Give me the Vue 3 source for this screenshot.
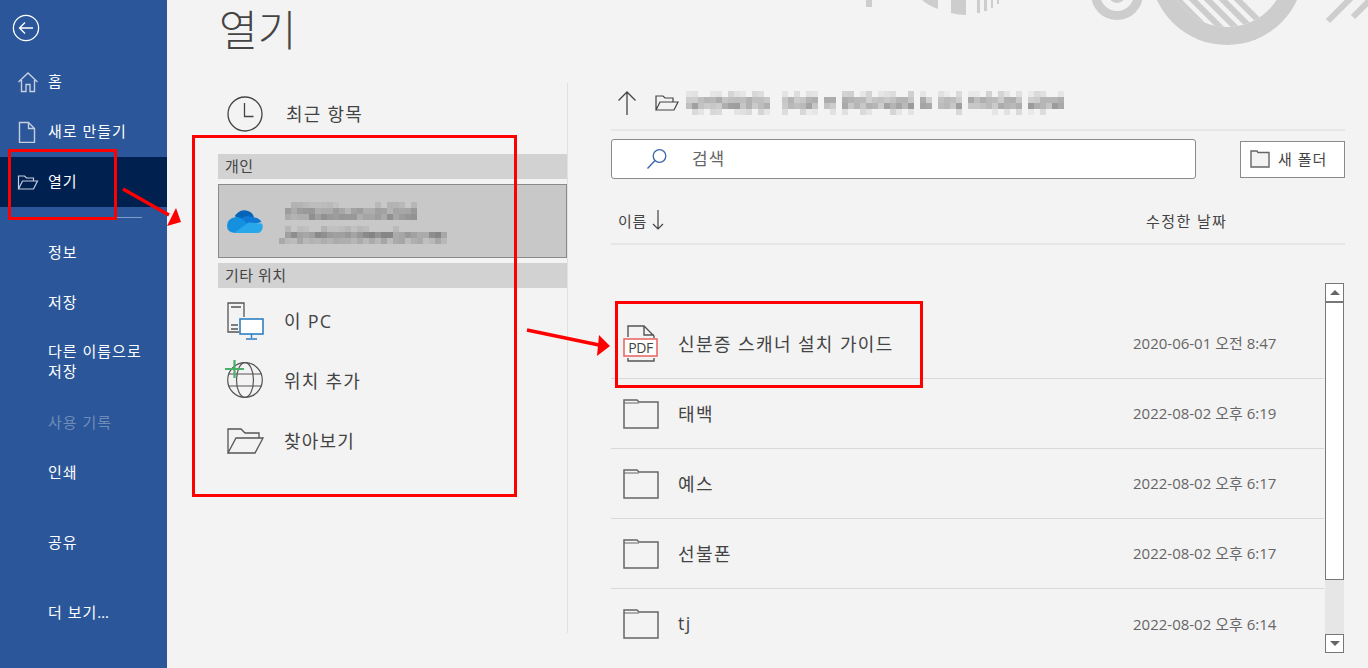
<template>
  <div class="app">
    <aside class="side">
      <div class="back">
        <svg width="28" height="28" viewBox="0 0 28 28" fill="none" stroke="#fff" stroke-width="1.3">
          <circle cx="14" cy="14" r="12.6" />
          <path d="M21 14H7.5M13 8.500 7.500 14l5.500 5.500" />
        </svg>
      </div>
      <a class="nav">
        <svg class="nav-icon" width="22" height="22" viewBox="0 0 22 22" fill="none" stroke="#c5cfdf" stroke-width="1.4">
          <path d="M1.500 11 11 2l9.500 9M4.500 9v11.500h4.500v-7h4v7h4.500V9" />
        </svg>
        <span>홈</span>
      </a>
      <a class="nav">
        <svg class="nav-icon" width="22" height="22" viewBox="0 0 22 22" fill="none" stroke="#c5cfdf" stroke-width="1.4">
          <path d="M2.500 1.500h9l6 6v14h-15zM11.500 1.500v6h6" />
        </svg>
        <span>새로 만들기</span>
      </a>
      <a class="nav active">
        <svg class="nav-icon" width="22" height="22" viewBox="0 0 22 22" fill="none" stroke="#c5cfdf" stroke-width="1.2">
          <path d="M1.500 18V5h6l2 2h7v3M1.500 18l4-8h15l-4 8z" />
        </svg>
        <span>열기</span>
      </a>
      <div class="nav-rule"></div>
      <a class="nav">정보</a>
      <a class="nav">저장</a>
      <a class="nav tall">다른 이름으로<br />저장</a>
      <a class="nav disabled">사용 기록</a>
      <a class="nav">인쇄</a>
      <a class="nav gap">공유</a>
      <a class="nav gap">더 보기…</a>
    </aside>

    <main class="main">
      <svg class="art" width="540" height="50" viewBox="840 0 540 50">
        <defs>
          <clipPath id="inner"><circle cx="1227" cy="-32" r="59" /></clipPath>
        </defs>
        <g fill="#cdcdcd">
          <rect x="866" y="0" width="6" height="7" />
          <path d="M922 0h16v9q-9-3-16-9z" />
          <path d="M951 0h15v15q-8 0-15-2z" />
          <rect x="977" y="0" width="3" height="13" />
          <rect x="984" y="0" width="3" height="11" />
          <rect x="991" y="0" width="2" height="8" />
          <rect x="997" y="0" width="2" height="4" />
          <circle cx="1117" cy="-6" r="26" />
          <circle cx="1227" cy="-32" r="77" />
        </g>
        <circle cx="1117" cy="-6" r="17" fill="#f3f3f3" />
        <circle cx="1117" cy="-6" r="9" fill="#cdcdcd" />
        <circle cx="1227" cy="-32" r="59" fill="#f3f3f3" />
        <g clip-path="url(#inner)" stroke="#cdcdcd" stroke-width="6">
          <path d="M1169-9l45 45M1187-6l36 36M1202-6l36 36M1217-6l36 36M1232-6l36 36" />
        </g>
        <path d="M1328 21 1354-5M1353 17 1376-6" stroke="#cdcdcd" stroke-width="6" fill="none" />
      </svg>

      <h1 class="title">열기</h1>

      <div class="columns">
        <section class="places">
          <div class="place recent">
            <svg class="place-icon" width="36" height="36" viewBox="0 0 36 36" fill="none" stroke="#444" stroke-width="1.300">
              <circle cx="18" cy="18" r="17" />
              <path d="M17.500 7v13.500h9" />
            </svg>
            <span>최근 항목</span>
          </div>
          <div class="group">개인</div>
          <div class="account">
            <svg class="cloud" width="36" height="25" viewBox="0 0 36 24">
              <path d="M14 20 8 6Q14-1 21 1.500 26 3 27 8L14 20z" fill="#0364b8" />
              <path d="M27 8q5 0 7.500 4.500L22 16 14 9q3-3 7-2.500z" fill="#0f78d4" />
              <path d="M9 7.500q4-.5 7 2.500l6 6-14 7.500Q0 23 0 16q0-7 9-8.500z" fill="#1490df" />
              <path d="M7 23.500 21.500 13 35 14q2 4-1 8-1 1.500-4 1.500z" fill="#28a8ea" />
            </svg>
            <svg class="mosaic account-mosaic" width="168" height="42" viewBox="0 0 168 42" shape-rendering="crispEdges">
              <rect v-for="(c, i) in accountCells" :key="i" :x="c.x" :y="c.y" width="6" height="6" :fill-opacity="c.o" />
            </svg>
          </div>
          <div class="group">기타 위치</div>
          <div class="place first">
            <svg class="place-icon" width="38" height="38" viewBox="0 0 38 38" fill="none" stroke="#555" stroke-width="1.300">
              <path d="M12 30H1V1h16v14M4 5h10M4 23h7M4 27h7" />
              <rect x="13" y="17" width="23" height="15" fill="#fff" stroke="#2f7fc4" stroke-width="1.600" />
              <path d="M24.500 32v4M19 37h11" stroke="#2f7fc4" stroke-width="1.400" />
            </svg>
            <span>이 PC</span>
          </div>
          <div class="place">
            <svg class="place-icon globe" width="38" height="38" viewBox="0 0 38 38" fill="none" stroke="#555" stroke-width="1.200">
              <circle cx="18" cy="19" r="17.300" />
              <ellipse cx="18" cy="19" rx="8.500" ry="17.300" />
              <path d="M1 13h34M1 25h34" />
              <path d="M-2 8h19M7.500-1v18" stroke="#4caf6a" stroke-width="2.200" />
            </svg>
            <span>위치 추가</span>
          </div>
          <div class="place">
            <svg class="place-icon" width="38" height="28" viewBox="0 0 38 28" fill="none" stroke="#555" stroke-width="1.300">
              <path d="M1 26V2h13l4 4h14v5M1 26l8-15h27l-8 15z" />
            </svg>
            <span>찾아보기</span>
          </div>
        </section>

        <section class="files">
          <div class="path">
            <svg width="20" height="26" viewBox="0 0 20 26" fill="none" stroke="#444" stroke-width="1.300">
              <path d="M10 25V2M1.500 10.500 10 2l8.500 8.500" />
            </svg>
            <svg class="path-folder" width="24" height="18" viewBox="0 0 24 18" fill="none" stroke="#444" stroke-width="1.200">
              <path d="M1 16V2h7l2 2h8v4M1 16 5 8h18l-4 8z" />
            </svg>
            <svg class="mosaic" width="378" height="24" viewBox="0 0 378 24" shape-rendering="crispEdges">
              <rect v-for="(c, i) in pathCells" :key="i" :x="c.x" :y="c.y" width="6" height="6" :fill-opacity="c.o" />
            </svg>
          </div>
          <div class="search-row">
            <div class="search">
              <svg width="22" height="22" viewBox="0 0 22 22" fill="none" stroke="#3a66a8" stroke-width="1.300">
                <circle cx="13.500" cy="8" r="6.300" />
                <path d="M9 12.500 1.500 20.500" />
              </svg>
              <span>검색</span>
            </div>
            <button class="new-folder">
              <svg width="20" height="18" viewBox="0 0 20 18" fill="#f3f3f3" stroke="#666" stroke-width="1.400">
                <path d="M1 17V1h6l1 1.500h11V17z" />
              </svg>
              <span>새 폴더</span>
            </button>
          </div>
          <div class="head">
            <span class="head-name">이름
              <svg width="12" height="22" viewBox="0 0 12 22" fill="none" stroke="#444" stroke-width="1.200">
                <path d="M6 1v19M1 15l5 5 5-5" />
              </svg>
            </span>
            <span class="head-date">수정한 날짜</span>
          </div>
          <div class="list-wrap">
            <ul class="list">
              <li v-for="f in files" :key="f.name" class="row">
                <svg v-if="f.pdf" width="36" height="38" viewBox="0 0 36 38" fill="none">
                  <path d="M5 12V1h16l10 10v2M21 1v9h10M5 33v3h26v-3" stroke="#555" stroke-width="1.400" />
                  <rect x="1" y="14" width="33" height="17" fill="#fff" stroke="#e8625f" stroke-width="1.500" />
                  <text x="17.500" y="27.500" text-anchor="middle" class="pdf-label">PDF</text>
                </svg>
                <svg v-else width="36" height="30" viewBox="0 0 36 30" fill="#f3f3f3" stroke="#666" stroke-width="1.500">
                  <path d="M1 29V1h13l2 2h19v26z" />
                  <path d="M1 4h15" stroke-width="1" />
                </svg>
                <span class="file-name">{{ f.name }}</span>
                <span class="file-date">{{ f.date }}</span>
              </li>
            </ul>
            <div class="scrollbar">
              <div class="sb-btn"><i class="tri up"></i></div>
              <div class="sb-thumb"></div>
              <div class="sb-track"></div>
              <div class="sb-btn"><i class="tri down"></i></div>
            </div>
          </div>
        </section>
      </div>
    </main>

    <div class="mark mark-open"></div>
    <div class="mark mark-places"></div>
    <div class="mark mark-file"></div>
    <svg class="arrows" width="1368" height="668" viewBox="0 0 1368 668">
      <path d="M123 189 169 215M527 330 599 345" stroke="#f00" stroke-width="3.500" fill="none" />
      <path d="M181 222 167 226 176 208zM610 346 597 356 599 335z" fill="#f00" />
    </svg>
  </div>
</template>

<script setup>
const files = [
  { name: "신분증 스캐너 설치 가이드", date: "2020-06-01 오전 8:47", pdf: true },
  { name: "태백", date: "2022-08-02 오후 6:19" },
  { name: "예스", date: "2022-08-02 오후 6:17" },
  { name: "선불폰", date: "2022-08-02 오후 6:17" },
  { name: "tj", date: "2022-08-02 오후 6:14" },
];

// pixelated blur over the private text
function mosaic(spans, rows, seed) {
  let s = seed;
  const next = () => {
    s = (s * 9301 + 49297) % 233280;
    return s / 233280;
  };
  const cells = [];
  for (const r of rows) {
    for (const [a, b] of r.spans || spans) {
      for (let x = a; x < b; x += 6) {
        const o = r.min + next() * (r.max - r.min);
        if (o > 0.03) cells.push({ x, y: r.y, o: o.toFixed(2) });
      }
    }
  }
  return cells;
}

const pathCells = mosaic(
  [[0, 84], [96, 132], [138, 150], [156, 228], [234, 246], [252, 276], [282, 336], [342, 378]],
  [
    { y: 0, min: -0.02, max: 0.14 },
    { y: 6, min: 0.14, max: 0.3 },
    { y: 12, min: 0.16, max: 0.38 },
    { y: 18, min: -0.08, max: 0.12 },
  ],
  7
);

const accountCells = mosaic(
  [],
  [
    { y: 0, min: -0.02, max: 0.12, spans: [[6, 66], [96, 138]] },
    { y: 6, min: 0.08, max: 0.24, spans: [[6, 138]] },
    { y: 12, min: 0.1, max: 0.3, spans: [[6, 138]] },
    { y: 24, min: -0.04, max: 0.1, spans: [[6, 132]] },
    { y: 30, min: 0.12, max: 0.34, spans: [[6, 168]] },
    { y: 36, min: 0.04, max: 0.18, spans: [[0, 168]] },
  ],
  23
);
</script>

<style scoped>
.app {
  position: relative;
  display: flex;
  width: 1368px;
  height: 668px;
  overflow: hidden;
  background: #f3f3f3;
  color: #444;
  font-family: "Open Sans", "Noto Sans CJK KR", sans-serif;
}

/* sidebar */
.side {
  flex: none;
  display: flex;
  flex-direction: column;
  width: 167px;
  background: #2b579a;
  color: #fff;
  font-size: 15px;
}

.back {
  height: 57px;
  padding: 14px 0 0 12px;
  box-sizing: border-box;
}

.back svg {
  display: block;
}

.nav {
  display: flex;
  align-items: center;
  height: 50px;
  padding: 0 0 4px 48px;
  box-sizing: border-box;
  letter-spacing: 1px;
}

.nav-icon {
  flex: none;
  margin: 4px 9px 0 -31px;
}

.nav.active {
  background: #002050;
}

.nav.tall {
  display: block;
  height: 70px;
  padding-top: 13px;
  line-height: 20px;
}

.nav.disabled {
  color: #6f8bb8;
}

.nav.gap {
  margin-top: 20px;
}

.nav-rule {
  height: 1px;
  margin: 10px 25px 10px 17px;
  background: #7f9ccb;
}

/* main */
.main {
  position: relative;
  flex: 1;
  min-width: 0;
}

.art {
  position: absolute;
  top: 0;
  left: 673px;
}

.title {
  height: 83px;
  margin: 0;
  padding-left: 52px;
  font-size: 42px;
  font-weight: 300;
  line-height: 60px;
  color: #444;
}

.columns {
  display: flex;
  align-items: flex-start;
}

.places {
  flex: none;
  width: 349px;
  height: 550px;
  margin-left: 51px;
  border-right: 1px solid #e1e1e1;
  font-size: 18px;
}

.place {
  display: flex;
  align-items: center;
  height: 60px;
  padding: 0 0 3px 9px;
  box-sizing: border-box;
  letter-spacing: 1.2px;
}

.place-icon {
  flex: none;
  margin: 3px 19px 0 0;
}

.place-icon.globe {
  overflow: visible;
  margin-top: 1px;
}

.recent {
  height: 62px;
  margin-bottom: 9px;
  padding-bottom: 2px;
}

.recent .place-icon {
  margin: 2px 23px 0 0;
}

.first {
  margin-top: 3px;
}

.group {
  height: 25px;
  padding-left: 7px;
  background: #d2d2d2;
  font-size: 15px;
  line-height: 24px;
  letter-spacing: 0.5px;
}

.account {
  display: flex;
  align-items: center;
  height: 74px;
  margin: 5px 0;
  padding-left: 8px;
  box-sizing: border-box;
  border: 1px solid #8a8a8a;
  background: #c8c8c8;
}

.cloud {
  flex: none;
  margin-right: 16px;
}

.mosaic {
  flex: none;
}

.account-mosaic {
  margin-top: 4px;
}

.files {
  flex: none;
  width: 734px;
  margin-left: 43px;
}

.path {
  display: flex;
  align-items: center;
  height: 40px;
  padding: 0 0 6px 6px;
  border-bottom: 2px solid #e6e6e6;
}

.path-folder {
  margin: 0 7px 0 18px;
}

.search-row {
  display: flex;
  justify-content: space-between;
  align-items: center;
  height: 40px;
  margin-top: 8px;
}

.search {
  display: flex;
  align-items: center;
  width: 585px;
  height: 40px;
  padding-left: 34px;
  box-sizing: border-box;
  border: 1px solid #8a8a8a;
  border-radius: 3px;
  background: #fff;
  color: #666;
  font-size: 17px;
}

.search span {
  margin: 0 0 3px 24px;
  letter-spacing: 0.8px;
}

.new-folder {
  display: flex;
  align-items: center;
  gap: 8px;
  width: 105px;
  height: 37px;
  padding: 0 0 0 9px;
  border: 1px solid #8a8a8a;
  background: #fff;
  color: #444;
  font: inherit;
  font-size: 15px;
  letter-spacing: 1px;
}

.new-folder span {
  margin-bottom: 2px;
}

.head {
  display: grid;
  grid-template-columns: 528px 1fr;
  align-items: center;
  height: 66px;
  padding: 18px 0 0 7px;
  font-size: 15px;
  letter-spacing: 0.6px;
  border-bottom: 2px solid #e6e6e6;
  box-sizing: border-box;
}

.head-name {
  display: flex;
  align-items: center;
  gap: 5px;
}

.head-date {
  letter-spacing: 1.4px;
}

.list-wrap {
  display: flex;
  align-items: flex-start;
}

.list {
  flex: none;
  width: 713px;
  margin: 0;
  padding: 64px 0 0;
  list-style: none;
}

.row {
  display: grid;
  grid-template-columns: 55px 455px 1fr;
  align-items: center;
  height: 70px;
  padding-left: 12px;
  box-sizing: border-box;
  border-bottom: 1px solid #d9d9d9;
}

.row:last-child {
  border-bottom: 0;
}

.pdf-label {
  font-family: "Open Sans", sans-serif;
  font-size: 14px;
  letter-spacing: -0.4px;
  fill: #444;
}

.file-name {
  margin-bottom: 2px;
  font-size: 18px;
  letter-spacing: 1.400px;
}

.file-date {
  margin-bottom: 2px;
  font-size: 15px;
  color: #666;
  white-space: nowrap;
}

.scrollbar {
  flex: none;
  display: flex;
  flex-direction: column;
  width: 19px;
  height: 370px;
  margin: 38px 0 0 1px;
  background: #e6e6e6;
}

.sb-btn {
  display: flex;
  flex: none;
  align-items: center;
  justify-content: center;
  height: 19px;
  box-sizing: border-box;
  border: 1px solid #777;
  background: #fff;
}

.sb-thumb {
  flex: none;
  height: 278px;
  box-sizing: border-box;
  border: 1px solid #777;
  background: #fff;
}

.sb-track {
  flex: 1;
}

.tri {
  width: 0;
  height: 0;
  border-left: 5px solid transparent;
  border-right: 5px solid transparent;
}

.tri.up {
  border-bottom: 5px solid #666;
}

.tri.down {
  border-top: 5px solid #666;
}

/* red annotations drawn over the screenshot */
.mark {
  position: absolute;
  box-sizing: border-box;
  border: 3px solid #f00;
}

.mark-open {
  left: 8px;
  top: 149px;
  width: 109px;
  height: 71px;
}

.mark-places {
  left: 192px;
  top: 135px;
  width: 325px;
  height: 362px;
}

.mark-file {
  left: 615px;
  top: 301px;
  width: 308px;
  height: 87px;
}

.arrows {
  position: absolute;
  top: 0;
  left: 0;
  pointer-events: none;
}
</style>
